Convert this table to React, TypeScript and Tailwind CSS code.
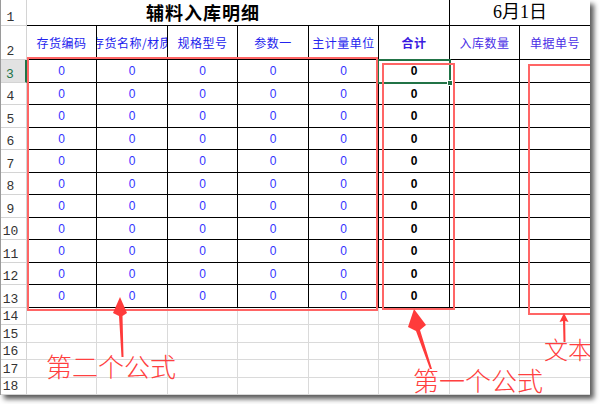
import React from 'react';

const colW = ['w-[70px]', 'w-[71px]', 'w-[70px]', 'w-[71px]', 'w-[70px]', 'w-[71px]', 'w-[70px]', 'w-[71px]'];
const heads = ['存货编码', '存货名称/材质', '规格型号', '参数一', '主计量单位', '合计', '入库数量', '单据单号'];
const dataRows = [
  { n: 3, h: 'h-[23px]' },
  { n: 4, h: 'h-[22px]' },
  { n: 5, h: 'h-[23px]' },
  { n: 6, h: 'h-[22px]' },
  { n: 7, h: 'h-[23px]' },
  { n: 8, h: 'h-[22px]' },
  { n: 9, h: 'h-[23px]' },
  { n: 10, h: 'h-[22px]' },
  { n: 11, h: 'h-[23px]' },
  { n: 12, h: 'h-[22px]' },
  { n: 13, h: 'h-[23px]' },
];
const emptyRows = [
  { n: 14, h: 'h-[17px]' },
  { n: 15, h: 'h-[18px]' },
  { n: 16, h: 'h-[17px]' },
  { n: 17, h: 'h-[18px]' },
  { n: 18, h: 'h-[17px]' },
];

const rowHead =
  "w-[26px] shrink-0 border-r border-b border-[#d4d4d4] flex items-end justify-center pr-[6px] pb-[1px] text-[13px] leading-none font-['Liberation_Mono',monospace] text-[#333]";

const App = () => {
  return (
    <div className="w-[600px] h-[404px] bg-white">
      <div className="relative w-[590px] h-[395px] bg-white overflow-hidden border-l border-[#9a9a9a] shadow-[4px_4px_5px_rgba(0,0,0,0.65)] font-['Noto_Sans_CJK_SC',sans-serif]">
        {/* row 1 */}
        <div className="flex h-[26px]">
          <div className={rowHead}>1</div>
          <div className="w-[423px] shrink-0 border-r border-b border-black flex items-center justify-center pr-[70px] text-[18px] font-bold tracking-[1px] text-black">
            辅料入库明细
          </div>
          <div className="w-[141px] shrink-0 border-r border-b border-black flex items-center justify-center text-[18px] text-black font-['Liberation_Serif','Noto_Sans_CJK_SC',serif]">
            6月1日
          </div>
        </div>

        {/* row 2 */}
        <div className="flex h-[34px]">
          <div className={rowHead}>2</div>
          {heads.map((t, i) => (
            <div
              key={t}
              className={`${colW[i]} shrink-0 overflow-hidden border-r border-b border-black flex items-center justify-center whitespace-nowrap text-[12px] tracking-[0.5px] ${
                i === 5 ? 'font-bold text-[#3a1be0]' : i > 5 ? 'text-[#4a2ee6]' : 'text-[#2323ee]'
              }`}
            >
              {t}
            </div>
          ))}
        </div>

        {/* data rows */}
        {dataRows.map((r) => (
          <div key={r.n} className={`flex ${r.h}`}>
            {r.n === 3 ? (
              <div className="w-[26px] shrink-0 border-r-2 border-b border-r-[#217346] border-b-[#d4d4d4] bg-[#e2e2e2] flex items-end justify-center pr-[6px] pb-[1px] text-[13px] leading-none font-['Liberation_Mono',monospace] text-[#217346]">
                3
              </div>
            ) : (
              <div className={rowHead}>{r.n}</div>
            )}
            {colW.map((w, i) => (
              <div
                key={i}
                className={`${w} shrink-0 border-r border-b border-black flex items-center justify-center text-[12px] font-['Liberation_Sans',sans-serif] ${
                  i === 5 ? 'font-bold text-black' : 'text-[#3333ff]'
                }`}
              >
                {i < 6 ? '0' : ''}
              </div>
            ))}
          </div>
        ))}

        {/* empty rows */}
        {emptyRows.map((r) => (
          <div key={r.n} className={`flex ${r.h}`}>
            <div className={rowHead}>{r.n}</div>
            {colW.map((w, i) => (
              <div key={i} className={`${w} shrink-0 border-r border-b border-[#dadada]`} />
            ))}
          </div>
        ))}

        {/* selection */}
        <div className="absolute left-[376px] top-[59px] w-[74px] h-[25px] border-2 border-[#217346]" />
        <div className="absolute left-[446px] top-[80px] w-[6px] h-[6px] bg-[#217346] border border-white" />

        {/* annotation boxes */}
        <div className="absolute left-[26px] top-[57px] w-[351px] h-[254px] border-2 border-[#ff6565]" />
        <div className="absolute left-[381px] top-[63px] w-[73px] h-[247px] border-2 border-[#ff6565]" />
        <div className="absolute left-[527px] top-[64px] w-[90px] h-[251px] border-2 border-[#ff6565]" />

        {/* arrows */}
        <svg className="absolute left-0 top-0" width="590" height="395" viewBox="0 0 590 395">
          <polygon points="119,297 126,313 121.5,316 122.5,357 120.5,357 118,316 112,313" fill="#ff3b3b" />
          <polygon points="413,309 425,325 419,330 431,369 429,369 415,331 407,327" fill="#ff3b3b" />
          <polygon points="563,313 567.5,322 564.2,321 564.5,342 562.5,342 562,321 558.5,322" fill="#ff3b3b" />
        </svg>

        {/* annotation labels */}
        <div className="absolute left-[45px] top-[353px] text-[26px] leading-none font-light text-[#ff4040] whitespace-nowrap">
          第二个公式
        </div>
        <div className="absolute left-[412px] top-[367px] text-[26px] leading-none font-light text-[#ff4040] whitespace-nowrap">
          第一个公式
        </div>
        <div className="absolute left-[543px] top-[337px] text-[24px] leading-none font-light text-[#ff4040] whitespace-nowrap">
          文本
        </div>
      </div>
    </div>
  );
};

export default App;
